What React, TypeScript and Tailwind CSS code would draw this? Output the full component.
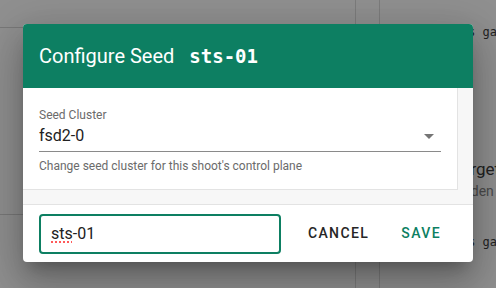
import React from "react"

const green = "#0d7f62"

function ArrowDrop() {
  return (
    <svg width="24" height="24" viewBox="0 0 24 24" className="shrink-0 text-[#757575]">
      <path d="M7 10l5 5 5-5z" fill="currentColor" />
    </svg>
  )
}

function Page() {
  // page underneath the overlay
  return (
    <div className="flex h-full w-full bg-white font-['Roboto',sans-serif]">
      <div className="flex w-[356px] flex-col border-r border-[#d6d6d6]">
        <div className="h-[28px] border-b border-[#d0d0d0]" />
        <div className="h-[187px] border-b border-[#d0d0d0]" />
        <div className="flex-1" />
      </div>
      <div className="w-[24px] border-r border-[#d6d6d6]" />
      <div className="flex flex-1 flex-col overflow-hidden">
        <div className="whitespace-nowrap pl-[88px] pt-[24px] font-['DejaVu_Sans_Mono',monospace] text-[12px] leading-4 text-[#222]">
          s gardener
        </div>
        <div className="whitespace-nowrap pl-[72px] pt-[117px] text-[17px] leading-6 text-[#222]">
          Target
        </div>
        <div className="whitespace-nowrap pl-[69px] text-[14px] leading-5 text-[#777]">
          Garden
        </div>
        <div className="whitespace-nowrap pl-[88px] pt-[33px] font-['DejaVu_Sans_Mono',monospace] text-[12px] leading-4 text-[#222]">
          s gardener
        </div>
      </div>
    </div>
  )
}

export default function App() {
  return (
    <div className="relative h-[288px] w-[496px] overflow-hidden font-['Roboto',sans-serif]">
      <Page />
      <div className="absolute inset-0 bg-[#212121]/50" />

      <div className="absolute left-[23px] top-[24px] flex h-[238px] w-[450px] flex-col overflow-hidden rounded-[4px] bg-white shadow-[0_11px_15px_-7px_rgba(0,0,0,0.25),0_24px_38px_3px_rgba(0,0,0,0.16),0_9px_46px_8px_rgba(0,0,0,0.14)]">
        <div className="flex h-[64px] shrink-0 items-center px-4 text-white" style={{ backgroundColor: green }}>
          <span className="text-[20px] font-normal leading-8">Configure Seed</span>
          <span className="ml-[15px] font-['DejaVu_Sans_Mono',monospace] text-[19px] font-bold leading-8">sts-01</span>
        </div>

        <div className="h-[117px] shrink-0 border-b border-[#e3e3e3] bg-[#f7f7f7]">
          <div className="w-[435px] border-b border-r border-[#e3e3e3] bg-white px-4 pb-[15px] pt-[19px]">
            <div className="text-[12px] leading-4 text-[#6b6b6b]">Seed Cluster</div>
            <div className="flex h-[29px] items-center border-b border-[#8a8a8a] pb-[3px]">
              <span className="flex-1 text-[16px] leading-6 text-[#212121]">fsd2-0</span>
              <ArrowDrop />
            </div>
            <div className="mt-[6px] text-[12px] leading-4 text-[#6b6b6b]">
              Change seed cluster for this shoot's control plane
            </div>
          </div>
        </div>

        <div className="flex flex-1 items-center px-4">
          <div className="flex h-[40px] w-[242px] items-center rounded-[4px] border-2 px-[10px] text-[16px] text-[#212121]" style={{ borderColor: green }}>
            <span className="underline decoration-[#ff5a5a] decoration-dotted decoration-2 underline-offset-[3px]">sts</span>
            <span>-01</span>
          </div>
          <div className="ml-auto flex items-center">
            <button className="px-4 py-2 text-[14px] font-medium uppercase tracking-[1.4px] text-[#262626]">Cancel</button>
            <button className="px-4 py-2 text-[14px] font-medium uppercase tracking-[1.4px]" style={{ color: green }}>Save</button>
          </div>
        </div>
      </div>
    </div>
  )
}
